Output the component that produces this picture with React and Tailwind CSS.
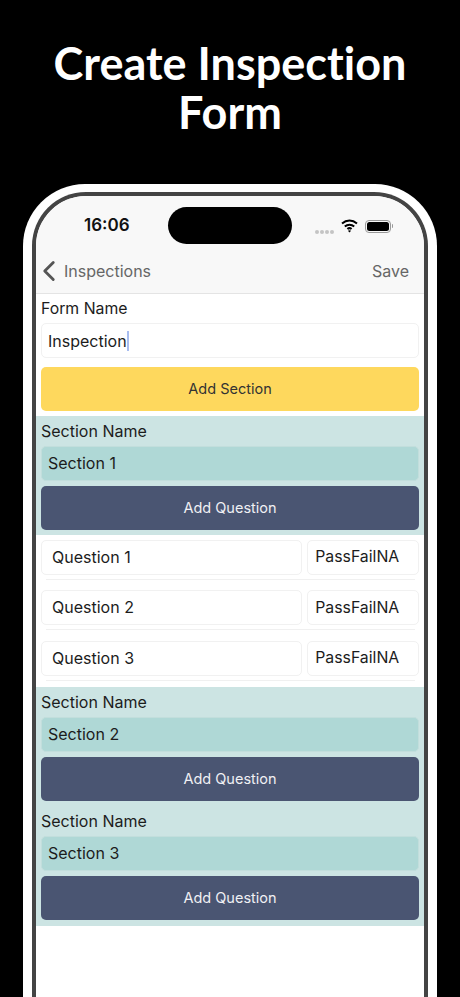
import React from 'react'
import { ChevronLeft } from 'lucide-react'

const inter = { fontFamily: 'Inter, sans-serif' }

const SectionBlock = ({ name }) => (
  <div className="bg-[#cce4e3] px-[5px] pt-[5px] pb-[5.3px]">
    <p className="h-[20px] text-[16px] leading-[20px] text-[#1c1c1c]">Section Name</p>
    <div className="mt-[5px] flex h-[35px] items-center rounded-[5px] border border-[#c2dedc] bg-[#afd8d6] px-[6px] pb-px text-[16px] text-[#1c1c1c]">
      {name}
    </div>
    <button className="mt-[5px] flex h-[44px] w-full items-center justify-center rounded-[5px] bg-[#4a5572] text-[14.5px] text-[#f0f0f4]">
      Add Question
    </button>
  </div>
)

const QuestionRow = ({ label }) => (
  <div className="h-[50.5px] px-[5px] pt-[4.7px]">
    <div className="flex gap-[5px]">
      <div className="flex h-[35px] w-[262px] items-center rounded-[5px] border border-[#f1f1f1] px-[10px] pb-px text-[16px] text-[#1c1c1c]">
        {label}
      </div>
      <div className="flex h-[35px] w-[112px] items-center rounded-[5px] border border-[#f1f1f1] px-[7px] pb-px text-[15.8px] text-[#1c1c1c]">
        PassFailNA
      </div>
    </div>
    <div className="mt-[4px] ml-[5px] h-px w-[369px] bg-[#f0f0f0]" />
  </div>
)

const App = () => {
  return (
    <div className="h-[997px] w-[460px] overflow-hidden bg-black" style={inter}>
      <h1
        className="flex h-[184px] flex-col items-center pt-[39px] text-center text-[45px] leading-[49px] font-bold text-white [font-variant-ligatures:none]"
        style={{ fontFamily: 'Lato, sans-serif' }}
      >
        <span>Create Inspection</span>
        <span>Form</span>
      </h1>

      <div className="mx-[23px] h-[860px] rounded-t-[62px] bg-white px-[9px] pt-[8px]">
        <div className="h-full rounded-t-[54px] bg-[#444444] px-[4px] pt-[4px]">
          <div className="h-full overflow-hidden rounded-t-[50px] bg-white">
            {/* status and nav bar */}
            <div className="h-[98px] border-b border-[#e4e4e4] bg-[#f8f8f8]">
              <div className="flex h-[48px] items-start pt-[11px]">
                <span className="mt-[8px] w-[132px] pl-[48px] text-[17px] leading-[20px] font-semibold text-[#111]">16:06</span>
                <div className="h-[37px] w-[124px] rounded-full bg-black" />
                <div className="mt-[11px] ml-[23px] flex items-center">
                  <div className="mt-[12px] flex gap-[1px]">
                    <i className="h-[4px] w-[4px] rounded-full bg-[#c4c4c4]" />
                    <i className="h-[4px] w-[4px] rounded-full bg-[#c4c4c4]" />
                    <i className="h-[4px] w-[4px] rounded-full bg-[#c4c4c4]" />
                    <i className="h-[4px] w-[4px] rounded-full bg-[#c4c4c4]" />
                  </div>
                  <svg className="ml-[7px]" width="17" height="14" viewBox="0 0 17 14" fill="none" stroke="#000" strokeWidth="2">
                    <path d="M1 4.5 C5.5 .5 11.5 .5 16 4.5" />
                    <path d="M3.8 7.5 C6.5 5 10.5 5 13.2 7.5" />
                    <path d="M6.4 10 C7.6 9 9.4 9 10.6 10" />
                    <path d="M8.5 13.6 L6.9 11.8 Q8.5 10.7 10.1 11.8 Z" fill="#000" stroke="none" />
                  </svg>
                  <div className="ml-[7px] flex h-[13px] w-[26px] items-center rounded-[4px] border border-[#999] p-px">
                    <div className="h-full w-full rounded-[2.5px] bg-black" />
                  </div>
                  <i className="ml-px h-[4px] w-px rounded-r-full bg-[#999]" />
                </div>
              </div>
              <div className="flex h-[49px] items-center justify-between pt-[5px] pr-[15px] text-[16px] text-[#666]">
                <span className="flex items-center">
                  <ChevronLeft size={34} strokeWidth={2} className="ml-[-4px] text-[#555]" />
                  <span className="ml-[-2px]">Inspections</span>
                </span>
                <span>Save</span>
              </div>
            </div>

            {/* form header */}
            <div className="h-[122px] px-[5px] pt-[4px]">
              <p className="h-[20px] pt-px text-[15.8px] leading-[20px] text-[#1c1c1c]">Form Name</p>
              <div className="mt-[5px] flex h-[35px] items-center rounded-[5px] border border-[#f1f1f1] px-[6px] text-[16px] text-[#1c1c1c]">
                Inspection
                <span className="h-[20px] w-[2px] bg-[#a8bdf0]" />
              </div>
              <button className="mt-[9px] flex h-[44px] w-full items-center justify-center rounded-[5px] bg-[#fed85d] text-[14.5px] text-[#333]">
                Add Section
              </button>
            </div>

            <SectionBlock name="Section 1" />
            <div className="h-[151.7px]">
              <QuestionRow label="Question 1" />
              <QuestionRow label="Question 2" />
              <QuestionRow label="Question 3" />
            </div>
            <SectionBlock name="Section 2" />
            <SectionBlock name="Section 3" />
          </div>
        </div>
      </div>
    </div>
  )
}

export default App
